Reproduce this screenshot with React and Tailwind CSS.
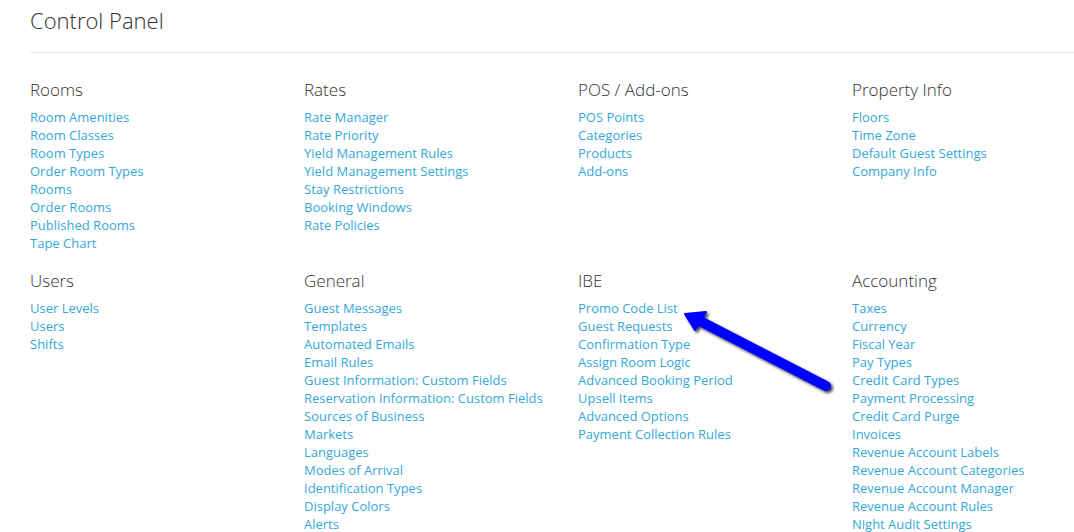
const sections = [
  {
    title: 'Rooms',
    links: ['Room Amenities', 'Room Classes', 'Room Types', 'Order Room Types', 'Rooms', 'Order Rooms', 'Published Rooms', 'Tape Chart'],
  },
  {
    title: 'Rates',
    links: ['Rate Manager', 'Rate Priority', 'Yield Management Rules', 'Yield Management Settings', 'Stay Restrictions', 'Booking Windows', 'Rate Policies'],
  },
  { title: 'POS / Add-ons', links: ['POS Points', 'Categories', 'Products', 'Add-ons'] },
  { title: 'Property Info', links: ['Floors', 'Time Zone', 'Default Guest Settings', 'Company Info'] },
  { title: 'Users', links: ['User Levels', 'Users', 'Shifts'] },
  {
    title: 'General',
    links: [
      'Guest Messages', 'Templates', 'Automated Emails', 'Email Rules', 'Guest Information: Custom Fields',
      'Reservation Information: Custom Fields', 'Sources of Business', 'Markets', 'Languages', 'Modes of Arrival',
      'Identification Types', 'Display Colors', 'Alerts',
    ],
  },
  {
    title: 'IBE',
    links: [
      'Promo Code List', 'Guest Requests', 'Confirmation Type', 'Assign Room Logic', 'Advanced Booking Period',
      'Upsell Items', 'Advanced Options', 'Payment Collection Rules',
    ],
  },
  {
    title: 'Accounting',
    links: [
      'Taxes', 'Currency', 'Fiscal Year', 'Pay Types', 'Credit Card Types', 'Payment Processing', 'Credit Card Purge',
      'Invoices', 'Revenue Account Labels', 'Revenue Account Categories', 'Revenue Account Manager',
      'Revenue Account Rules', 'Night Audit Settings',
    ],
  },
];

function Section({ section }) {
  return (
    <div>
      <h3 className="text-[17px] leading-[24px] font-light text-[#333]">{section.title}</h3>
      <ul className="mt-[6px]">
        {section.links.map((l) => (
          <li key={l} className="text-[13px] leading-[18px] text-[#35a8d8]">
            <a href="#">{l}</a>
          </li>
        ))}
      </ul>
    </div>
  );
}

function Arrow() {
  return (
    <svg className="absolute left-0 top-0 pointer-events-none" width="1074" height="532">
      <defs>
        <filter id="sh" x="-20%" y="-20%" width="140%" height="140%">
          <feDropShadow dx="2" dy="2" stdDeviation="1.5" floodColor="#000" floodOpacity="0.75" />
        </filter>
      </defs>
      <g filter="url(#sh)">
        <line x1="826" y1="386" x2="698" y2="320" stroke="#0000ff" strokeWidth="10" strokeLinecap="round" />
        <polygon points="685,314 706,312 695,330" fill="#0000ff" stroke="#0000ff" strokeWidth="2" strokeLinejoin="round" />
      </g>
    </svg>
  );
}

export default function App() {
  return (
    <div className="relative w-[1074px] h-[532px] overflow-hidden bg-white pl-[30px] pt-[5px]" style={{ fontFamily: '"Open Sans", sans-serif' }}>
      <h1 className="text-[22px] leading-[31px] font-light text-[#333]">Control Panel</h1>
      <div className="mt-[16px] border-t border-[#e5e5e5]" />
      <div className="mt-[25px] grid grid-cols-[274px_274px_274px_274px] gap-y-[17px]">
        {sections.map((s) => (
          <Section key={s.title} section={s} />
        ))}
      </div>
      <Arrow />
    </div>
  );
}
